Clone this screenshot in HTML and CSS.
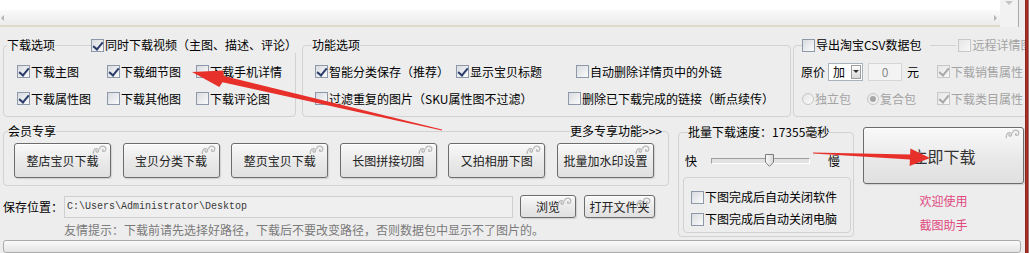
FILE: index.html
```html
<!DOCTYPE html>
<html lang="zh-CN">
<head>
    <meta charset="UTF-8">
    <title>截图助手</title>
    <link rel="stylesheet" href="styles.css">
</head>
<body>
    <!-- 按钮右上角的花纹 -->
    <svg class="defs" width="0" height="0">
        <symbol id="swirl" viewBox="0 0 16 10">
            <path d="M1.5 9 C0.6 5.5 3 3 5.4 3.8 C7.4 4.6 6.8 7.6 4.7 7.1 C3.5 6.8 3.7 5.3 4.9 5.5" />
            <path d="M7.6 4.2 C7.6 1.4 10.8 0.6 12.6 1.6 C14.8 2.9 14 6.6 11.4 6.3 C10 6.1 10.2 4.3 11.6 4.5" />
        </symbol>
    </svg>

    <div class="win">
        <div class="app">
            <!-- 日志框底部，横向滚动条 -->
            <div class="memo">
                <div class="memo-body">
                    <div class="memo-text"></div>
                    <div class="hscroll"><i class="tri-l"></i><i class="tri-r"></i></div>
                </div>
                <div class="vscroll"><i class="tri-d"></i></div>
            </div>

            <!-- 选项区 -->
            <div class="options">
                <fieldset class="grp g-dl">
                    <legend><span>下载选项</span><i class="lg-line w36"></i><span class="ck"><i class="cb on"></i>同时下载视频（主图、描述、评论）</span></legend>
                    <div class="grp-body grid3">
                        <span class="ck"><i class="cb on"></i>下载主图</span>
                        <span class="ck"><i class="cb on"></i>下载细节图</span>
                        <span class="ck"><i class="cb"></i>下载手机详情</span>
                        <span class="ck"><i class="cb on"></i>下载属性图</span>
                        <span class="ck"><i class="cb"></i>下载其他图</span>
                        <span class="ck"><i class="cb"></i>下载评论图</span>
                    </div>
                </fieldset>

                <fieldset class="grp g-fn">
                    <legend>功能选项</legend>
                    <div class="grp-body">
                        <div class="row">
                            <span class="ck w141"><i class="cb on"></i>智能分类保存（推荐）</span>
                            <span class="ck w120"><i class="cb on"></i>显示宝贝标题</span>
                            <span class="ck"><i class="cb"></i>自动删除详情页中的外链</span>
                        </div>
                        <div class="row">
                            <span class="ck w253"><i class="cb"></i>过滤重复的图片（SKU属性图不过滤）</span>
                            <span class="ck"><i class="cb"></i>删除已下载完成的链接（断点续传）</span>
                        </div>
                    </div>
                </fieldset>

                <fieldset class="grp g-csv">
                    <legend><span class="ck"><i class="cb"></i>导出淘宝CSV数据包</span><i class="lg-line w26"></i><span class="ck dis"><i class="cb"></i>远程详情图</span></legend>
                    <div class="grp-body">
                        <div class="row">
                            <span>原价</span>
                            <span class="select">加<i class="drop"></i></span>
                            <span class="num">0</span>
                            <span class="unit">元</span>
                            <span class="ck dis sale"><i class="cb on"></i>下载销售属性</span>
                        </div>
                        <div class="row">
                            <span class="rad dis w65"><i class="rd"></i>独立包</span>
                            <span class="rad dis w70"><i class="rd on"></i>复合包</span>
                            <span class="ck dis"><i class="cb on"></i>下载类目属性</span>
                        </div>
                    </div>
                </fieldset>
            </div>

            <!-- 下半部分 -->
            <div class="bottom">
                <div class="leftcol">
                    <fieldset class="grp g-vip">
                        <legend><span>会员专享</span><i class="lg-line fill"></i><span>更多专享功能&gt;&gt;&gt;</span><i class="lg-line w2"></i></legend>
                        <div class="btns">
                            <button class="btn">整店宝贝下载<svg class="swirl"><use href="#swirl"/></svg></button>
                            <button class="btn">宝贝分类下载<svg class="swirl"><use href="#swirl"/></svg></button>
                            <button class="btn">整页宝贝下载<svg class="swirl"><use href="#swirl"/></svg></button>
                            <button class="btn">长图拼接切图<svg class="swirl"><use href="#swirl"/></svg></button>
                            <button class="btn">又拍相册下图<svg class="swirl"><use href="#swirl"/></svg></button>
                            <button class="btn">批量加水印设置<svg class="swirl"><use href="#swirl"/></svg></button>
                        </div>
                    </fieldset>
                    <div class="save">
                        <span class="save-lb">保存位置：</span>
                        <span class="path">C:\Users\Administrator\Desktop</span>
                        <button class="btn sm b-browse">浏览<svg class="swirl"><use href="#swirl"/></svg></button>
                        <button class="btn sm b-open">打开文件夹<svg class="swirl"><use href="#swirl"/></svg></button>
                    </div>
                    <div class="tip">友情提示：下载前请先选择好路径，下载后不要改变路径，否则数据包中显示不了图片的。</div>
                </div>

                <fieldset class="grp g-speed">
                    <legend>批量下载速度：17355毫秒</legend>
                    <div class="speed-row">
                        <span>快</span>
                        <span class="track">
                            <svg class="thumb" width="9" height="13" viewBox="0 0 9 13">
                                <defs>
                                    <linearGradient id="tg" x1="0" y1="0" x2="1" y2="0">
                                        <stop offset="0" stop-color="#fbfbfb"/>
                                        <stop offset="1" stop-color="#d8d8d8"/>
                                    </linearGradient>
                                </defs>
                                <polygon points="0.5,0.5 8.5,0.5 8.5,8.2 4.5,12.3 0.5,8.2" fill="url(#tg)" stroke="#7c7c7c"/>
                            </svg>
                        </span>
                        <span class="slow">慢</span>
                    </div>
                    <fieldset class="grp g-close">
                        <div class="row22"><span class="ck"><i class="cb"></i>下图完成后自动关闭软件</span></div>
                        <div class="row22"><span class="ck"><i class="cb"></i>下图完成后自动关闭电脑</span></div>
                    </fieldset>
                </fieldset>

                <div class="rightcol">
                    <button class="btn big">立即下载<svg class="swirl"><use href="#swirl"/></svg></button>
                    <div class="welcome first">欢迎使用</div>
                    <div class="welcome">截图助手</div>
                </div>
            </div>

            <div class="progress"></div>
        </div>
        <div class="edge"></div>

        <!-- 截图上画的红色箭头 -->
        <svg class="marks" width="1029" height="253" viewBox="0 0 1029 253">
            <polygon points="192,72 223.1,70.5 223.9,76.1 442.1,129.4 441.9,130.6 222.5,82.3 219.3,87.1" />
            <polygon points="930,158 910.4,148.6 910.1,154.6 813,152.4 813,153.6 909.9,159.6 909.6,166.1" />
        </svg>
    </div>
</body>
</html>
```

FILE: styles.css
```css
/* 截图助手 主窗口 */
* { box-sizing: border-box; }
html, body { margin: 0; padding: 0; }
body {
    width: 1029px; height: 253px; overflow: hidden;
    background: #ededed; color: #000;
    font-family: "Noto Sans CJK SC", "Liberation Sans", sans-serif;
    font-size: 12px; line-height: 16px;
}
.defs { position: absolute; width: 0; height: 0; }

.win { display: flex; height: 253px; position: relative; }
.app { width: 1025px; height: 253px; overflow: hidden; display: flex; flex-direction: column; flex: none; }
.edge { width: 4px; flex: none; background: linear-gradient(to right, #7d1c17, #b0332a 40%, #8a1f19 75%, #d9c9c7); }

/* 日志框底部 */
.memo { display: flex; height: 27px; width: 1019px; flex: none; border-right: 1px solid #aaaaaa; }
.memo-body { flex: 1; display: flex; flex-direction: column; border-bottom: 2px solid #dedcc9; }
.memo-text { height: 10px; background: #fff; }
.hscroll { flex: 1; display: flex; align-items: center; justify-content: space-between; padding: 0 3px 0 1px; background: linear-gradient(#fafafa, #ebebeb); }
.tri-l { width: 0; height: 0; border: 3px solid transparent; border-left: 0; border-right: 3px solid #b4b4b4; }
.tri-r { width: 0; height: 0; border: 3px solid transparent; border-right: 0; border-left: 3px solid #b4b4b4; }
.vscroll { width: 18px; background: #f2f2f2; display: flex; justify-content: center; padding-top: 1px; }
.tri-d { width: 0; height: 0; border: 4px solid transparent; border-bottom: 0; border-top: 4px solid #c4c4c4; }

/* 分组框 */
.grp { margin: 0; padding: 0; min-width: 0; flex: none; border: 1px solid #d2d2d2; border-radius: 4px; }
.grp legend { display: flex; align-items: center; height: 16px; line-height: 16px; padding: 0; white-space: nowrap; }
.lg-line { height: 1px; background: #d2d2d2; flex: none; }
.w36 { width: 36px; }
.w26 { width: 26px; margin-left: 9px; margin-right: 2px; }
.w2 { width: 2px; }
.fill { flex: 1; }

/* 复选框 / 单选框 */
.ck, .rad { display: flex; align-items: center; gap: 1px; white-space: nowrap; }
.cb {
    position: relative; flex: none; width: 13px; height: 13px;
    border: 1px solid #8d99a8; background: linear-gradient(135deg, #d8dbe0, #fbfbfb);
}
.cb.on::after {
    content: ""; position: absolute; left: 3px; top: 0; width: 4px; height: 8px;
    border: solid #2b3d6b; border-width: 0 2px 2px 0; transform: rotate(40deg);
}
.dis { color: #a3a3a3; }
.dis .cb { border-color: #c8c8c8; background: linear-gradient(135deg, #e6e6e6, #f8f8f8); }
.dis .cb.on::after { border-color: #a9a9a9; }
.rd { position: relative; flex: none; width: 12px; height: 12px; border-radius: 50%; border: 1px solid #c6c6c6; background: linear-gradient(135deg, #e4e4e4, #fafafa); }
.rd.on::after { content: ""; position: absolute; left: 2px; top: 2px; width: 6px; height: 6px; border-radius: 50%; background: #a6a6a6; }

.row { display: flex; align-items: center; height: 27px; }
.w141 { width: 141px; }
.w120 { width: 120px; }
.w253 { width: 253px; }
.w65 { width: 65px; margin-left: 1px; }
.w70 { width: 70px; }

/* 下载选项 */
.g-dl { width: 293px; }
.g-dl legend { margin-left: 3px; }
.g-dl .grp-body { padding: 5px 0 4px 13px; }
.grid3 { display: grid; grid-template-columns: 90px 89px auto; grid-auto-rows: 27px; align-items: center; }

.options { display: flex; align-items: flex-start; margin-top: 10px; padding-left: 3px; flex: none; }

/* 功能选项 */
.g-fn { width: 489px; margin-left: 6px; }
.g-fn legend { margin-left: 9px; }
.g-fn .grp-body { padding: 5px 0 4px 12px; }

/* 淘宝CSV */
.g-csv { width: 300px; margin-left: 2px; }
.g-csv legend { margin-left: 8px; }
.g-csv .grp-body { padding: 5px 0 4px 7px; }
.select {
    display: flex; align-items: center; width: 35px; height: 18px; margin-left: 3px;
    padding: 0 1px 0 4px; border: 1px solid #a9b3c0; background: #fff;
}
.drop {
    display: flex; align-items: center; justify-content: center; margin-left: auto;
    width: 10px; height: 14px; border: 1px solid #9c9c9c; background: linear-gradient(#fdfdfd, #d9d9d9);
}
.drop::after { content: ""; border: 3px solid transparent; border-bottom: 0; border-top: 3px solid #333; }
.num { width: 34px; height: 18px; margin-left: 5px; border: 1px solid #d6d6d6; background: #f3f3f3; color: #8a8a8a; text-align: center; line-height: 16px; }
.unit { margin-left: 5px; }
.sale { margin-left: 18px; }

/* 下半部分 */
.bottom { display: flex; align-items: flex-start; margin-top: 7px; padding-left: 3px; height: 113px; flex: none; }
.leftcol { width: 666px; flex: none; }
.g-vip { width: 666px; }
.g-vip legend { width: 656px; margin-left: 4px; height: 14px; line-height: 14px; }
.btns { display: flex; justify-content: space-between; width: 650px; padding: 5px 0 7px 10px; }

.btn {
    position: relative; font: inherit; color: #222; padding: 0; cursor: default;
    border: 1px solid #6c6c6c; border-radius: 3px;
    background: linear-gradient(#f9f9f9, #e9e9e9 55%, #e0e0e0);
    box-shadow: inset 0 1px 0 #fff, 1px 1px 1px rgba(0, 0, 0, .12);
}
.btns .btn { width: 97px; height: 35px; }
.swirl { position: absolute; right: 2px; top: 1px; width: 16px; height: 10px; fill: none; stroke: #b9b9b9; stroke-width: 1.3; }

.save { display: flex; align-items: center; height: 23px; margin-top: 9px; }
.save-lb { width: 61px; flex: none; }
.path {
    width: 449px; height: 22px; flex: none; padding-left: 2px;
    border: 1px solid #cfcfcf; background: #efefef; color: #3a3a3a;
    font-family: "Liberation Mono", monospace; font-size: 10px; line-height: 20px;
}
.btn.sm { height: 23px; flex: none; }
.b-browse { width: 56px; margin-left: 7px; }
.b-open { width: 71px; margin-left: 8px; }
.tip { margin-top: 5px; padding-left: 61px; line-height: 14px; color: #7a7a7a; white-space: nowrap; }

/* 下载速度 */
.g-speed { width: 176px; margin-left: 9px; margin-top: 1px; padding-bottom: 3px; }
.g-speed legend { margin-left: 9px; height: 14px; line-height: 14px; }
.speed-row { display: flex; align-items: center; height: 20px; margin-top: 12px; padding-left: 6px; }
.track {
    position: relative; width: 99px; height: 6px; margin-left: 14px;
    border: 1px solid; border-color: #9e9e9e #ffffff #ffffff #9e9e9e; background: #e2e2e2;
}
.thumb { position: absolute; left: 53px; top: -5px; }
.slow { margin-left: 18px; }
.g-close { margin: 6px 2px 0 4px; padding: 8px 0 2px 7px; }
.row22 { display: flex; align-items: center; height: 22px; }

/* 立即下载 */
.rightcol { width: 161px; margin-left: 9px; flex: none; display: flex; flex-direction: column; align-items: center; }
.btn.big { width: 161px; height: 57px; margin-top: 3px; font-size: 16px; color: #333; }
.welcome { line-height: 24px; color: #e0497f; }
.welcome.first { margin-top: 5px; }

.progress {
    width: 1018px; height: 13px; margin: 3px 0 0 3px; flex: none;
    border: 1px solid #ababab; border-radius: 3px; background: linear-gradient(#fbfbfb, #e3e3e3);
}

/* 红色标注箭头 */
.marks { position: absolute; left: 0; top: 0; pointer-events: none; }
.marks polygon { fill: #e8302b; }
```
